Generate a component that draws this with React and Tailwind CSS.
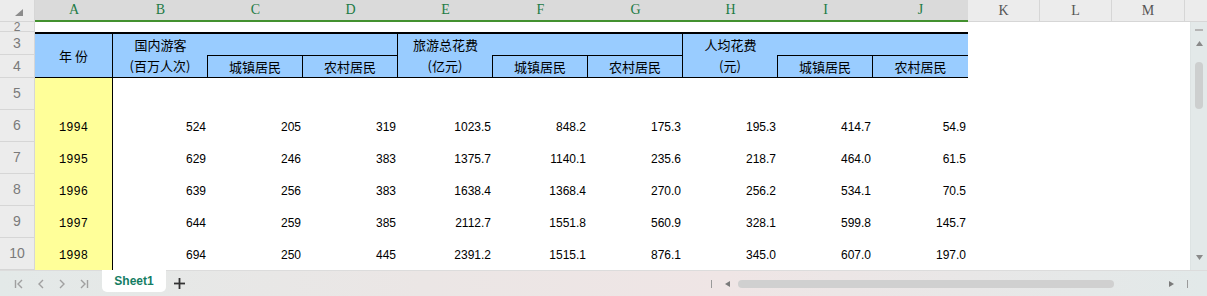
import React from "react";

const columns = [
  { label: "A", w: "w-[78px]", sel: true },
  { label: "B", w: "w-[95px]", sel: true },
  { label: "C", w: "w-[95px]", sel: true },
  { label: "D", w: "w-[95px]", sel: true },
  { label: "E", w: "w-[95px]", sel: true },
  { label: "F", w: "w-[95px]", sel: true },
  { label: "G", w: "w-[95px]", sel: true },
  { label: "H", w: "w-[95px]", sel: true },
  { label: "I", w: "w-[95px]", sel: true },
  { label: "J", w: "w-[95px]", sel: true },
  { label: "K", w: "w-[72px]", sel: false },
  { label: "L", w: "w-[72px]", sel: false },
  { label: "M", w: "w-[73px]", sel: false },
];

const rows = [
  ["1994", "524", "205", "319", "1023.5", "848.2", "175.3", "195.3", "414.7", "54.9"],
  ["1995", "629", "246", "383", "1375.7", "1140.1", "235.6", "218.7", "464.0", "61.5"],
  ["1996", "639", "256", "383", "1638.4", "1368.4", "270.0", "256.2", "534.1", "70.5"],
  ["1997", "644", "259", "385", "2112.7", "1551.8", "560.9", "328.1", "599.8", "145.7"],
  ["1998", "694", "250", "445", "2391.2", "1515.1", "876.1", "345.0", "607.0", "197.0"],
];

const cjk = "font-['Noto_Sans_CJK_SC',sans-serif]";
const rowHead =
  "bg-[#ececec] border-r border-b border-[#d6d6d6] flex items-center justify-center text-[14px] text-[#7a7a7a] font-['Liberation_Sans',sans-serif] overflow-hidden";
const blue = "bg-[#99ccff] border-black flex items-center justify-center text-[13px] text-black " + cjk;

const Empty = ({ n }) =>
  Array.from({ length: n }).map((_, i) => <div key={i} className="bg-white" />);

export default function App() {
  return (
    <div className="w-[1207px] h-[296px] overflow-hidden bg-white flex flex-col select-none">
      {/* column headers */}
      <div className="flex h-[22px] shrink-0">
        <div className="w-[35px] h-[22px] bg-[#ececec] border-r border-b border-[#d6d6d6] relative">
          <svg className="absolute left-[15px] top-[9px]" width="8" height="7" viewBox="0 0 8 7">
            <polygon points="8,0 8,7 0,7" fill="#8c8c8c" />
          </svg>
        </div>
        {columns.map((c) => (
          <div
            key={c.label}
            className={`${c.w} h-[22px] flex items-center justify-center text-[14px] font-['Liberation_Serif',serif] ${
              c.sel
                ? "bg-[#dadada] border-b-2 border-[#43912f] text-[#1d7a45]"
                : "bg-[#ececec] border-b border-r border-[#d6d6d6] text-[#555]"
            }`}
          >
            <span className="pb-[1px]">{c.label}</span>
          </div>
        ))}
        <div className="flex-1 h-[22px] bg-[#ececec] border-b border-[#d6d6d6]" />
      </div>

      <div className="flex h-[248px] shrink-0">
        {/* sheet body */}
        <div className="w-[1190px] grid grid-cols-[35px_78px_repeat(9,95px)_72px_72px_73px_5px] grid-rows-[10px_23px_23px_32px_repeat(5,32px)]">
          {/* row 2 */}
          <div className={rowHead + " !text-[12px] leading-[10px]"}>2</div>
          <Empty n={14} />

          {/* row 3 */}
          <div className={rowHead}>3</div>
          <div className={blue + " row-span-2 border-t-2 border-r border-b"}>年 份</div>
          <div className={blue + " border-t-2"}>国内游客</div>
          <div className={blue + " border-t-2"} />
          <div className={blue + " border-t-2 border-r"} />
          <div className={blue + " border-t-2"}>旅游总花费</div>
          <div className={blue + " border-t-2"} />
          <div className={blue + " border-t-2 border-r"} />
          <div className={blue + " border-t-2"}>人均花费</div>
          <div className={blue + " border-t-2"} />
          <div className={blue + " border-t-2"} />
          <Empty n={4} />

          {/* row 4 */}
          <div className={rowHead}>4</div>
          <div className={blue + " border-r border-b"}>(百万人次)</div>
          <div className={blue + " border-t border-r border-b"}>城镇居民</div>
          <div className={blue + " border-t border-r border-b"}>农村居民</div>
          <div className={blue + " border-r border-b"}>(亿元)</div>
          <div className={blue + " border-t border-r border-b"}>城镇居民</div>
          <div className={blue + " border-t border-r border-b"}>农村居民</div>
          <div className={blue + " border-r border-b"}>(元)</div>
          <div className={blue + " border-t border-r border-b"}>城镇居民</div>
          <div className={blue + " border-t border-b"}>农村居民</div>
          <Empty n={4} />

          {/* row 5 */}
          <div className={rowHead}>5</div>
          <div className="bg-[#ffff99] border-r border-black" />
          <Empty n={13} />

          {/* data rows */}
          {rows.map((r, ri) => (
            <React.Fragment key={r[0]}>
              <div className={rowHead}>{ri + 6}</div>
              <div className="bg-[#ffff99] border-r border-black flex items-center justify-center pt-[4px] text-[12px] text-black font-['Liberation_Mono',monospace]">
                {r[0]}
              </div>
              {r.slice(1).map((v, i) => (
                <div
                  key={i}
                  className="flex items-center justify-end pr-[2px] pt-[1px] text-[12px] text-black font-['Liberation_Sans',sans-serif]"
                >
                  {v}
                </div>
              ))}
              <Empty n={4} />
            </React.Fragment>
          ))}
        </div>

        {/* vertical scrollbar */}
        <div className="w-[17px] h-[248px] bg-[#e3e9e9] border-l border-[#dde3e3] flex flex-col items-center">
          <div className="mt-[7px] w-[8px] h-[2px] bg-[#b5b5b5]" />
          <svg className="mt-[10px]" width="7" height="5" viewBox="0 0 7 5">
            <polygon points="3.5,0 7,5 0,5" fill="#8a8a8a" />
          </svg>
          <div className="mt-[16px] w-[8px] h-[47px] rounded-full bg-[#cdcfcf]" />
          <div className="flex-1" />
          <svg className="mb-[10px]" width="7" height="5" viewBox="0 0 7 5">
            <polygon points="0,0 7,0 3.5,5" fill="#8a8a8a" />
          </svg>
        </div>
      </div>

      {/* sheet tab bar */}
      <div className="h-[26px] shrink-0 flex items-start border-t border-[#dcdcdc] bg-[linear-gradient(90deg,#e3e9e8_0%,#ebe6e5_35%,#efe5e5_60%,#e2e9e9_100%)]">
        <div className="w-[102px] h-full flex items-center pl-[14px] gap-[13px] text-[#a0a0a0]">
          <svg width="10" height="10" viewBox="0 0 10 10" fill="none" stroke="currentColor" strokeWidth="1.4">
            <line x1="1.5" y1="1" x2="1.5" y2="9" />
            <polyline points="8,1 4,5 8,9" />
          </svg>
          <svg width="8" height="10" viewBox="0 0 8 10" fill="none" stroke="currentColor" strokeWidth="1.4">
            <polyline points="6,1 2,5 6,9" />
          </svg>
          <svg width="8" height="10" viewBox="0 0 8 10" fill="none" stroke="currentColor" strokeWidth="1.4">
            <polyline points="2,1 6,5 2,9" />
          </svg>
          <svg width="10" height="10" viewBox="0 0 10 10" fill="none" stroke="currentColor" strokeWidth="1.4">
            <polyline points="2,1 6,5 2,9" />
            <line x1="8.5" y1="1" x2="8.5" y2="9" />
          </svg>
        </div>
        <div className="w-[64px] h-[22px] -mt-px bg-white rounded-b-[5px] flex items-center justify-center text-[12px] font-bold text-[#147d63] font-['Liberation_Sans',sans-serif]">
          Sheet1
        </div>
        <div className="h-full flex items-center ml-[8px]">
          <svg width="11" height="11" viewBox="0 0 11 11" stroke="#333" strokeWidth="1.8">
            <line x1="5.5" y1="0" x2="5.5" y2="11" />
            <line x1="0" y1="5.5" x2="11" y2="5.5" />
          </svg>
        </div>
        <div className="ml-[526px] h-full flex items-center">
          <div className="w-px h-[8px] bg-[#9a9a9a]" />
          <svg className="ml-[13px]" width="5" height="6" viewBox="0 0 5 6">
            <polygon points="5,0 5,6 0,3" fill="#7a7a7a" />
          </svg>
          <div className="ml-[8px] w-[376px] h-[8px] rounded-full bg-[#d0d0d0]" />
          <svg className="ml-[55px]" width="5" height="6" viewBox="0 0 5 6">
            <polygon points="0,0 0,6 5,3" fill="#7a7a7a" />
          </svg>
          <div className="ml-[13px] w-px h-[8px] bg-[#9a9a9a]" />
        </div>
      </div>
    </div>
  );
}
